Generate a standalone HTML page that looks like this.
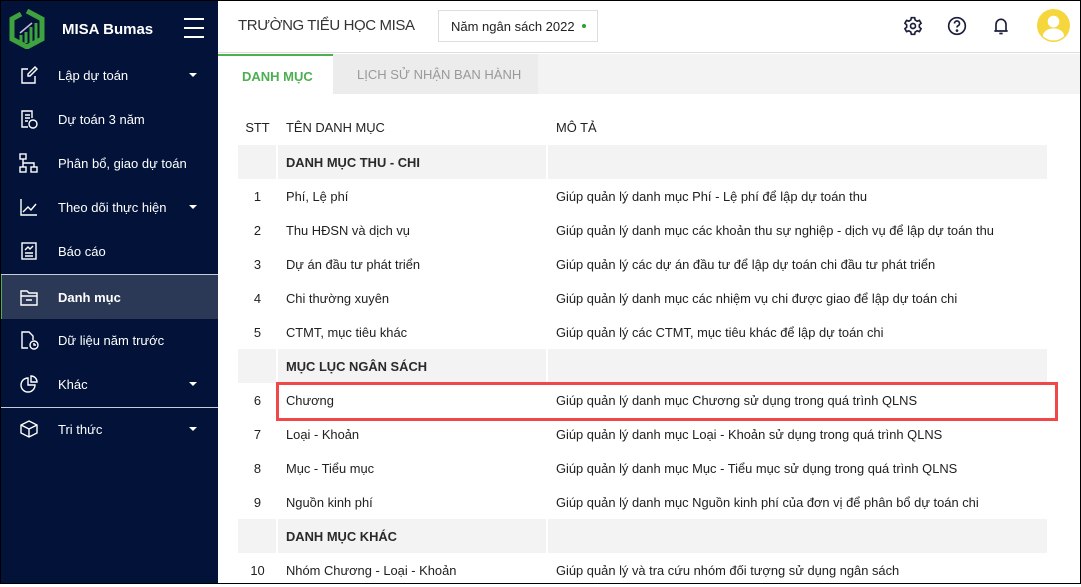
<!DOCTYPE html>
<html><head><meta charset="utf-8"><style>
*{box-sizing:border-box;margin:0;padding:0}
body{width:1081px;height:584px;overflow:hidden;font-family:"Liberation Sans",sans-serif;font-size:13px;color:#212121;background:#fff;position:relative}
.frame{position:absolute;inset:0;border:1px solid #000;pointer-events:none;z-index:10}
.side{position:absolute;left:0;top:0;width:218px;height:584px;background:#021238;color:#fff}
.logo{position:absolute;left:9px;top:9px}
.brand{position:absolute;left:62px;top:21px;font-weight:bold;font-size:15px}
.ham{position:absolute;left:184px;top:18px;width:20px}
.ham i{display:block;height:2px;background:#fff;margin-bottom:7px}
.item{position:absolute;left:0;width:218px;height:44px;display:flex;align-items:center}
.item svg{position:absolute;left:19px}
.item span{position:absolute;left:58px;font-size:13px}
.item .car{position:absolute;left:189px;width:0;height:0;border-left:4px solid transparent;border-right:4px solid transparent;border-top:4px solid #fff}
.sep{position:absolute;left:0;width:218px;height:1px;background:#c9ccd4}
.main{position:absolute;left:218px;top:0;right:0;height:584px}
.hdr{height:53px;border-bottom:1px solid #ddd;position:relative}
.title{position:absolute;left:20px;top:17px;font-size:15px;letter-spacing:-0.4px;color:#333}
.year{position:absolute;left:220px;top:10px;width:160px;height:32px;border:1px solid #ddd;font-size:13px;padding:8px 0 0 12px}
.year b{position:absolute;left:143px;top:13px;width:4px;height:4px;border-radius:50%;background:#2ba12b}
.tabs{position:absolute;top:54px;left:0;right:0;height:40px;background:#f3f3f3}
.tab1{position:absolute;left:0;top:0;width:115px;height:40px;background:#fff;border-top:2px solid #4caf50;color:#4caf50;font-weight:bold;padding:13px 0 0 24px}
.tab2{position:absolute;left:115px;top:0;width:205px;height:40px;background:#ececec;color:#999;padding:13px 0 0 24px}
table{position:absolute;left:20px;top:109px;width:809px;border-collapse:collapse;font-size:12.9px}
td,th{height:34px;padding:0 0 0 9px;text-align:left;font-weight:normal;vertical-align:middle}
th{height:36px;color:#222}
td.n{text-align:center;padding:0}
tr.g td{background:#f3f3f3;font-weight:bold;color:#2a2a2a;border-right:2px solid #fff;padding-left:8px}
tr.g td:last-child{border-right:0}
.red{position:absolute;left:276px;top:382px;width:782px;height:39px;border:3px solid #f04848}
</style></head><body>
<div class="side">
<svg class="logo" width="36" height="40" viewBox="0 0 36 40"><path d="M18 2 L33 10 V30 L18 38 L3 30 V10 L12 5" fill="none" stroke="#3ea33e" stroke-width="5"/><path d="M12 26v8M17 23v11M22 18v16M27 14v18" stroke="#3ea33e" stroke-width="3"/><path d="M11 24 L23 14" stroke="#cbd" stroke-width="1.5"/></svg>
<div class="brand">MISA Bumas</div>
<div class="ham"><i></i><i></i><i></i></div>
<div class="item" style="top:53px"><svg width="20" height="20" viewBox="0 0 20 20" fill="none" stroke="#fff" stroke-width="1.4"><path d="M9 4H3v14h13v-7"/><path d="M16 2l2 2-7 7H9V9z"/></svg><span>Lập dự toán</span><i class="car"></i></div>
<div class="item" style="top:97px"><svg width="20" height="20" viewBox="0 0 20 20" fill="none" stroke="#fff" stroke-width="1.4"><path d="M13 9V2H3v16h6"/><path d="M6 6h5M6 9h5M6 12h3"/><circle cx="14" cy="15" r="4"/></svg><span>Dự toán 3 năm</span></div>
<div class="item" style="top:141px"><svg width="20" height="20" viewBox="0 0 20 20" fill="none" stroke="#fff" stroke-width="1.4"><rect x="1" y="1" width="6" height="5"/><rect x="1" y="14" width="6" height="5"/><rect x="12" y="14" width="6" height="5"/><path d="M4 6v8M4 10h11v4"/></svg><span>Phân bổ, giao dự toán</span></div>
<div class="item" style="top:185px"><svg width="20" height="20" viewBox="0 0 20 20" fill="none" stroke="#fff" stroke-width="1.4"><path d="M2 2v16h16"/><path d="M4 15l5-5 3 3 5-6"/></svg><span>Theo dõi thực hiện</span><i class="car"></i></div>
<div class="item" style="top:229px"><svg width="20" height="20" viewBox="0 0 20 20" fill="none" stroke="#fff" stroke-width="1.4"><rect x="3" y="2" width="14" height="16"/><path d="M6 9l3-3 2 2 3-3M6 12h8M6 15h8"/></svg><span>Báo cáo</span></div>
<div class="sep" style="top:274px"></div>
<div class="item" style="top:275px;background:#2c3956;border-left:2px solid #4caf50"><svg width="20" height="20" viewBox="0 0 20 20" fill="none" stroke="#fff" stroke-width="1.4" style="left:17px"><path d="M2 4h6l2 2h8v12H2z"/><path d="M2 9h16M7 13h6"/></svg><span style="left:56px;font-weight:bold">Danh mục</span></div>
<div class="item" style="top:318px"><svg width="20" height="20" viewBox="0 0 20 20" fill="none" stroke="#fff" stroke-width="1.4"><path d="M9 18H3V2h7l4 4v4"/><circle cx="15" cy="15" r="4"/><path d="M15 13v2h2"/></svg><span>Dữ liệu năm trước</span></div>
<div class="item" style="top:362px"><svg width="20" height="20" viewBox="0 0 20 20" fill="none" stroke="#fff" stroke-width="1.4"><path d="M9 4a7 7 0 1 0 7 7H9z"/><path d="M12 2v6h6a6 6 0 0 0-6-6z"/></svg><span>Khác</span><i class="car"></i></div>
<div class="sep" style="top:407px"></div>
<div class="item" style="top:407px"><svg width="20" height="20" viewBox="0 0 20 20" fill="none" stroke="#fff" stroke-width="1.4"><path d="M10 2l8 4v8l-8 4-8-4V6z"/><path d="M2 6l8 4 8-4M10 10v8"/></svg><span>Tri thức</span><i class="car"></i></div>
</div>
<div class="main">
<div class="hdr">
<div class="title">TRƯỜNG TIỂU HỌC MISA</div>
<div class="year">Năm ngân sách 2022<b></b></div>
<svg style="position:absolute;left:685px;top:16px" width="20" height="20" viewBox="0 0 24 24" fill="none" stroke="#1b1f3b" stroke-width="2"><circle cx="12" cy="12" r="3"/><path d="M10 2h4l.6 2.8 2.4 1.4 2.7-.9 2 3.4-2.1 1.9v2.8l2.1 1.9-2 3.4-2.7-.9-2.4 1.4L14 22h-4l-.6-2.8-2.4-1.4-2.7.9-2-3.4 2.1-1.9v-2.8L2.3 8.7l2-3.4 2.7.9 2.4-1.4z"/></svg>
<svg style="position:absolute;left:729px;top:16px" width="20" height="20" viewBox="0 0 24 24" fill="none" stroke="#1b1f3b" stroke-width="2"><circle cx="12" cy="12" r="10"/><path d="M9 9a3 3 0 1 1 4 2.8c-.8.4-1 1-1 2"/><circle cx="12" cy="17.5" r=".6" fill="#1b1f3b"/></svg>
<svg style="position:absolute;left:773px;top:16px" width="20" height="20" viewBox="0 0 24 24" fill="none" stroke="#1b1f3b" stroke-width="2"><path d="M6 18V10a6 6 0 0 1 12 0v8H4h16"/><path d="M10 21h4M12 3v1"/></svg>
<svg style="position:absolute;left:819px;top:9px" width="33" height="33" viewBox="0 0 34 34"><circle cx="17" cy="17" r="17" fill="#f5d63d"/><circle cx="17" cy="13" r="6" fill="#fff"/><path d="M6 28a11 8 0 0 1 22 0a16 16 0 0 1-22 0z" fill="#fff"/></svg>
</div>
<div class="tabs"><div class="tab1">DANH MỤC</div><div class="tab2">LỊCH SỬ NHẬN BAN HÀNH</div></div>
<table>
<tr><th style="width:39px;text-align:center;padding:0">STT</th><th style="width:270px">TÊN DANH MỤC</th><th>MÔ TẢ</th></tr>
<tr class="g"><td></td><td>DANH MỤC THU - CHI</td><td></td></tr>
<tr><td class="n">1</td><td>Phí, Lệ phí</td><td>Giúp quản lý danh mục Phí - Lệ phí để lập dự toán thu</td></tr>
<tr><td class="n">2</td><td>Thu HĐSN và dịch vụ</td><td>Giúp quản lý danh mục các khoản thu sự nghiệp - dịch vụ để lập dự toán thu</td></tr>
<tr><td class="n">3</td><td>Dự án đầu tư phát triển</td><td>Giúp quản lý các dự án đầu tư để lập dự toán chi đầu tư phát triển</td></tr>
<tr><td class="n">4</td><td>Chi thường xuyên</td><td>Giúp quản lý danh mục các nhiệm vụ chi được giao để lập dự toán chi</td></tr>
<tr><td class="n">5</td><td>CTMT, mục tiêu khác</td><td>Giúp quản lý các CTMT, mục tiêu khác để lập dự toán chi</td></tr>
<tr class="g"><td></td><td>MỤC LỤC NGÂN SÁCH</td><td></td></tr>
<tr><td class="n">6</td><td>Chương</td><td>Giúp quản lý danh mục Chương sử dụng trong quá trình QLNS</td></tr>
<tr><td class="n">7</td><td>Loại - Khoản</td><td>Giúp quản lý danh mục Loại - Khoản sử dụng trong quá trình QLNS</td></tr>
<tr><td class="n">8</td><td>Mục - Tiểu mục</td><td>Giúp quản lý danh mục Mục - Tiểu mục sử dụng trong quá trình QLNS</td></tr>
<tr><td class="n">9</td><td>Nguồn kinh phí</td><td>Giúp quản lý danh mục Nguồn kinh phí của đơn vị để phân bổ dự toán chi</td></tr>
<tr class="g"><td></td><td>DANH MỤC KHÁC</td><td></td></tr>
<tr><td class="n">10</td><td>Nhóm Chương - Loại - Khoản</td><td>Giúp quản lý và tra cứu nhóm đối tượng sử dụng ngân sách</td></tr>
</table>
</div>
<div class="red"></div>
<div class="frame"></div>
</body></html>
